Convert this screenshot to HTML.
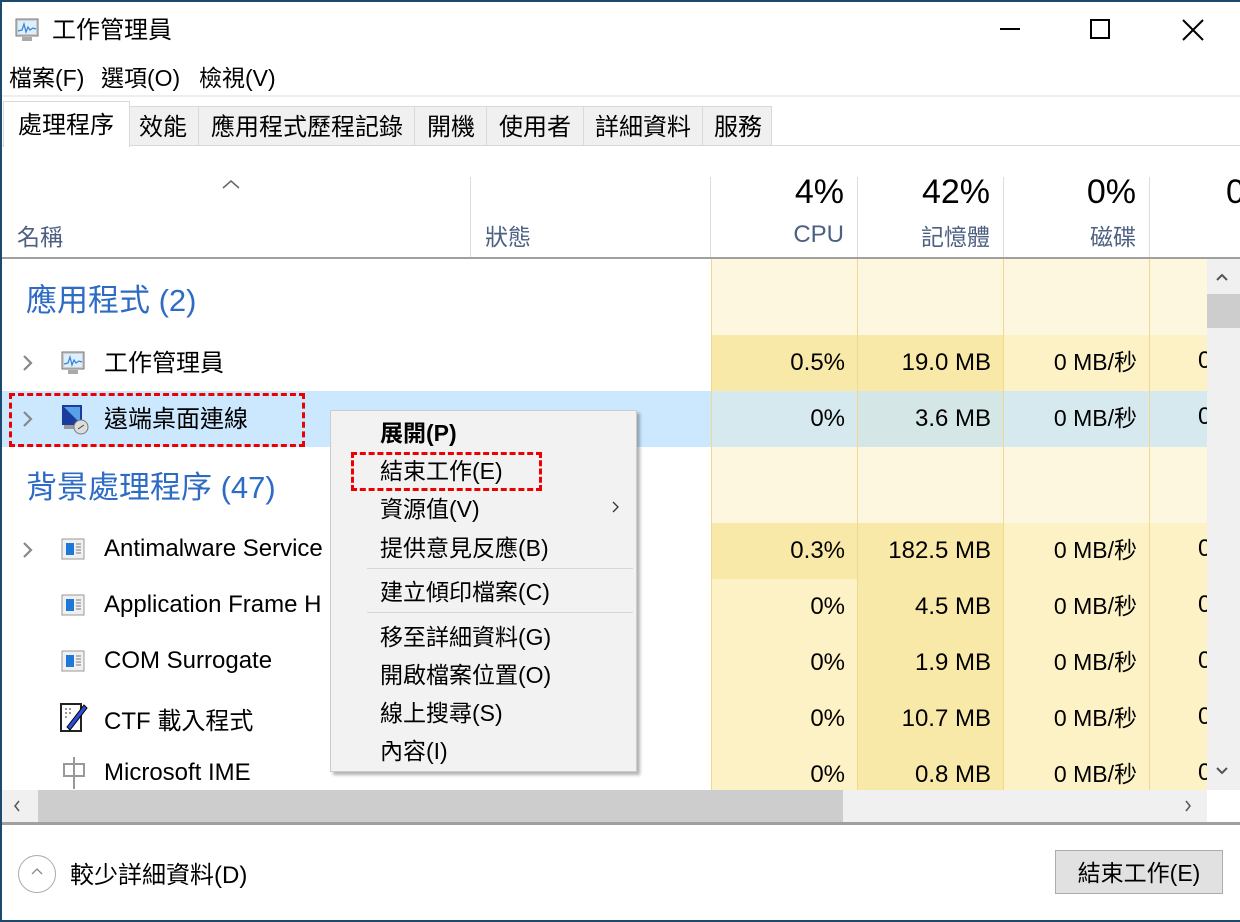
<!DOCTYPE html>
<html><head><meta charset="utf-8"><style>
*{margin:0;padding:0;box-sizing:border-box}
body{width:1240px;height:922px;overflow:hidden;background:#fff;font-family:"Liberation Sans","Noto Sans CJK TC",sans-serif;position:relative;color:#000}
.a{position:absolute;white-space:nowrap}
.c{position:absolute;height:56px;line-height:56px;text-align:right;padding-right:12px;font-size:24px}
.ms{font-size:23px;line-height:54px}
.m{position:absolute;left:380px;font-size:23px;white-space:nowrap}
.r{position:absolute;left:104px;font-size:24px;white-space:nowrap}
</style></head><body>
<div class="a" style="left:0;top:0;width:1240px;height:2px;background:#1b4a6e"></div>
<div class="a" style="left:0;top:0;width:2px;height:922px;background:#1b4a6e"></div>
<div class="a" style="left:0;top:920px;width:1240px;height:2px;background:#1b4a6e"></div>
<!-- title -->
<svg class="a" style="left:14px;top:16px" width="28" height="28" viewBox="0 0 28 28"><rect x="2" y="3" width="22" height="17" fill="#ccc" stroke="#777"/><rect x="4" y="5" width="18" height="13" fill="#dcefff"/><path d="M4 15l4-1 2-6 2 8 2-5 2 3 3-2 3 1" stroke="#3a7fcf" fill="none" stroke-width="1.2"/><rect x="8" y="21" width="10" height="4" fill="#aaa"/></svg>
<div class="a" style="left:52px;top:10px;font-size:24px">工作管理員</div>
<div class="a" style="left:1000px;top:28px;width:20px;height:2px;background:#000"></div>
<div class="a" style="left:1090px;top:19px;width:20px;height:20px;border:2px solid #000"></div>
<svg class="a" style="left:1182px;top:19px" width="22" height="22"><path d="M1 1L21 21M21 1L1 21" stroke="#000" stroke-width="2"/></svg>
<!-- menu -->
<div class="a" style="left:9px;top:59px;font-size:23px">檔案(F)</div>
<div class="a" style="left:101px;top:59px;font-size:23px">選項(O)</div>
<div class="a" style="left:199px;top:59px;font-size:23px">檢視(V)</div>
<div class="a" style="left:2px;top:95px;width:1238px;height:2px;background:#eee"></div>
<!-- tabs -->
<div class="a" style="left:2px;top:145px;width:1238px;height:1px;background:#d9d9d9"></div>
<div class="a" style="left:109px;top:106px;width:663px;height:40px;background:#f0f0f0;border:1px solid #d9d9d9"></div>
<div class="a" style="left:3px;top:101px;width:127px;height:46px;background:#fff;border:1px solid #d9d9d9;border-bottom:none"></div>
<div class="a" style="left:18px;top:105px;font-size:24px">處理程序</div>
<div class="a" style="left:139px;top:107px;font-size:24px">效能</div>
<div class="a" style="left:198px;top:106px;width:1px;height:40px;background:#d9d9d9"></div>
<div class="a" style="left:211px;top:107px;font-size:24px">應用程式歷程記錄</div>
<div class="a" style="left:414px;top:106px;width:1px;height:40px;background:#d9d9d9"></div>
<div class="a" style="left:427px;top:107px;font-size:24px">開機</div>
<div class="a" style="left:486px;top:106px;width:1px;height:40px;background:#d9d9d9"></div>
<div class="a" style="left:499px;top:107px;font-size:24px">使用者</div>
<div class="a" style="left:583px;top:106px;width:1px;height:40px;background:#d9d9d9"></div>
<div class="a" style="left:595px;top:107px;font-size:24px">詳細資料</div>
<div class="a" style="left:702px;top:106px;width:1px;height:40px;background:#d9d9d9"></div>
<div class="a" style="left:714px;top:107px;font-size:24px">服務</div>
<!-- header -->
<svg class="a" style="left:222px;top:179px" width="18" height="10"><path d="M1 9L9 2L17 9" stroke="#666" fill="none" stroke-width="1.5"/></svg>
<div class="a" style="left:17px;top:218px;font-size:23px;color:#4d6082">名稱</div>
<div class="a" style="left:485px;top:218px;font-size:23px;color:#4d6082">狀態</div>
<div class="a" style="left:470px;top:177px;width:1px;height:81px;background:#ddd"></div>
<div class="a" style="left:710px;top:177px;width:1px;height:81px;background:#ddd"></div>
<div class="a" style="left:857px;top:177px;width:1px;height:81px;background:#ddd"></div>
<div class="a" style="left:1003px;top:177px;width:1px;height:81px;background:#ddd"></div>
<div class="a" style="left:1149px;top:177px;width:1px;height:81px;background:#ddd"></div>
<div class="a" style="left:711px;top:173px;width:133px;text-align:right;font-size:34px">4%</div>
<div class="a" style="left:711px;top:221px;width:133px;text-align:right;font-size:24px;color:#4d6082">CPU</div>
<div class="a" style="left:858px;top:173px;width:132px;text-align:right;font-size:34px">42%</div>
<div class="a" style="left:858px;top:218px;width:132px;text-align:right;font-size:23px;color:#4d6082">記憶體</div>
<div class="a" style="left:1004px;top:173px;width:132px;text-align:right;font-size:34px">0%</div>
<div class="a" style="left:1004px;top:218px;width:132px;text-align:right;font-size:23px;color:#4d6082">磁碟</div>
<div class="a" style="left:1226px;top:173px;font-size:34px">0</div>
<div class="a" style="left:2px;top:257px;width:1238px;height:2px;background:#a0a0a0"></div>
<!-- data background -->
<div class="a" style="left:711px;top:259px;width:496px;height:531px;background:#fef7e0"></div>
<div class="a" style="left:711px;top:335px;width:496px;height:56px;background:#fdf1c6"></div>
<div class="a" style="left:711px;top:335px;width:292px;height:56px;background:#f9e9a8"></div>
<div class="a" style="left:711px;top:523px;width:496px;height:267px;background:#fdf1c6"></div>
<div class="a" style="left:857px;top:523px;width:146px;height:267px;background:#f9e9a8"></div>
<div class="a" style="left:711px;top:523px;width:146px;height:56px;background:#f9e9a8"></div>
<div class="a" style="left:2px;top:391px;width:709px;height:56px;background:#cce8ff"></div>
<div class="a" style="left:711px;top:391px;width:496px;height:56px;background:#d6e9ef"></div>
<div class="a" style="left:857px;top:391px;width:146px;height:56px;background:#d4e7e6"></div>
<div class="a" style="left:711px;top:259px;width:1px;height:531px;background:#f0d890"></div>
<div class="a" style="left:857px;top:259px;width:1px;height:531px;background:#f0d890"></div>
<div class="a" style="left:1003px;top:259px;width:1px;height:531px;background:#f0d890"></div>
<div class="a" style="left:1149px;top:259px;width:1px;height:531px;background:#f0d890"></div>
<!-- groups -->
<div class="a" style="left:26px;top:275px;font-size:31px;color:#2e6bc5">應用程式 (2)</div>
<div class="a" style="left:26px;top:462px;font-size:31px;color:#2e6bc5">背景處理程序 (47)</div>
<!-- rows -->
<svg class="a" style="left:22px;top:354px" width="12" height="18"><path d="M2 2L9 9L2 16" stroke="#888" fill="none" stroke-width="2.2"/></svg>
<svg class="a" style="left:22px;top:410px" width="12" height="18"><path d="M2 2L9 9L2 16" stroke="#888" fill="none" stroke-width="2.2"/></svg>
<svg class="a" style="left:22px;top:541px" width="12" height="18"><path d="M2 2L9 9L2 16" stroke="#888" fill="none" stroke-width="2.2"/></svg>
<svg class="a" style="left:60px;top:349px" width="28" height="28" viewBox="0 0 28 28"><rect x="2" y="3" width="22" height="17" fill="#ccc" stroke="#777"/><rect x="4" y="5" width="18" height="13" fill="#dcefff"/><path d="M4 15l4-1 2-6 2 8 2-5 2 3 3-2 3 1" stroke="#3a7fcf" fill="none" stroke-width="1.2"/><rect x="8" y="21" width="10" height="4" fill="#aaa"/></svg>
<svg class="a" style="left:60px;top:403px" width="30" height="32" viewBox="0 0 30 32"><rect x="2" y="2" width="20" height="20" fill="#1a3c9c"/><path d="M4 4L20 20V4z" fill="#5aa0e8"/><rect x="4" y="22" width="14" height="4" fill="#999"/><circle cx="21" cy="24" r="7" fill="#ddd" stroke="#777"/><path d="M18 26l6-4" stroke="#444"/></svg>
<div class="r" style="top:343px">工作管理員</div>
<div class="r" style="top:399px">遠端桌面連線</div>
<div class="a" style="left:9px;top:393px;width:296px;height:54px;border:3px dashed #e00"></div>
<svg class="a" style="left:61px;top:538px" width="24" height="22"><rect x="1" y="1" width="22" height="20" fill="#f0f0f0" stroke="#999"/><rect x="5" y="5" width="8" height="12" fill="#1e78d7"/><path d="M15 6h5M15 9h5M15 12h5M15 15h5" stroke="#777"/></svg>
<svg class="a" style="left:61px;top:594px" width="24" height="22"><rect x="1" y="1" width="22" height="20" fill="#f0f0f0" stroke="#999"/><rect x="5" y="5" width="8" height="12" fill="#1e78d7"/><path d="M15 6h5M15 9h5M15 12h5M15 15h5" stroke="#777"/></svg>
<svg class="a" style="left:61px;top:650px" width="24" height="22"><rect x="1" y="1" width="22" height="20" fill="#f0f0f0" stroke="#999"/><rect x="5" y="5" width="8" height="12" fill="#1e78d7"/><path d="M15 6h5M15 9h5M15 12h5M15 15h5" stroke="#777"/></svg>
<svg class="a" style="left:60px;top:701px" width="28" height="32"><rect x="1" y="3" width="20" height="27" fill="#fff" stroke="#222" stroke-width="2"/><path d="M5 8h2M9 8h2M5 12h2M9 12h2M5 16h2" stroke="#333"/><path d="M7 26L24 4l3 3L10 29z" fill="#2b4ed8" stroke="#000"/></svg>
<svg class="a" style="left:62px;top:756px" width="24" height="34"><path d="M12 1v32" stroke="#999" stroke-width="2"/><rect x="2" y="8" width="20" height="12" fill="none" stroke="#999" stroke-width="2"/></svg>
<div class="r" style="top:535px">Antimalware Service</div>
<div class="r" style="top:591px">Application Frame H</div>
<div class="r" style="top:647px">COM Surrogate</div>
<div class="r" style="top:701px">CTF 載入程式</div>
<div class="r" style="top:759px">Microsoft IME</div>
<!-- data -->
<div class="c" style="left:711px;top:335px;width:146px">0.5%</div><div class="c" style="left:857px;top:335px;width:146px">19.0 MB</div><div class="c ms" style="left:1003px;top:335px;width:146px">0 MB/秒</div>
<div class="c" style="left:711px;top:391px;width:146px">0%</div><div class="c" style="left:857px;top:391px;width:146px">3.6 MB</div><div class="c ms" style="left:1003px;top:391px;width:146px">0 MB/秒</div>
<div class="c" style="left:711px;top:523px;width:146px">0.3%</div><div class="c" style="left:857px;top:523px;width:146px">182.5 MB</div><div class="c ms" style="left:1003px;top:523px;width:146px">0 MB/秒</div>
<div class="c" style="left:711px;top:579px;width:146px">0%</div><div class="c" style="left:857px;top:579px;width:146px">4.5 MB</div><div class="c ms" style="left:1003px;top:579px;width:146px">0 MB/秒</div>
<div class="c" style="left:711px;top:635px;width:146px">0%</div><div class="c" style="left:857px;top:635px;width:146px">1.9 MB</div><div class="c ms" style="left:1003px;top:635px;width:146px">0 MB/秒</div>
<div class="c" style="left:711px;top:691px;width:146px">0%</div><div class="c" style="left:857px;top:691px;width:146px">10.7 MB</div><div class="c ms" style="left:1003px;top:691px;width:146px">0 MB/秒</div>
<div class="c" style="left:711px;top:747px;width:146px">0%</div><div class="c" style="left:857px;top:747px;width:146px">0.8 MB</div><div class="c ms" style="left:1003px;top:747px;width:146px">0 MB/秒</div>
<div class="a" style="left:1198px;top:347px;font-size:24px">0</div>
<div class="a" style="left:1198px;top:403px;font-size:24px">0</div>
<div class="a" style="left:1198px;top:535px;font-size:24px">0</div>
<div class="a" style="left:1198px;top:591px;font-size:24px">0</div>
<div class="a" style="left:1198px;top:647px;font-size:24px">0</div>
<div class="a" style="left:1198px;top:703px;font-size:24px">0</div>
<div class="a" style="left:1198px;top:759px;font-size:24px">0</div>
<!-- vscroll -->
<div class="a" style="left:1207px;top:259px;width:33px;height:531px;background:#f0f0f0"></div>
<div class="a" style="left:1207px;top:294px;width:33px;height:34px;background:#cdcdcd"></div>
<svg class="a" style="left:1215px;top:272px" width="14" height="10"><path d="M2 8L7 3L12 8" stroke="#555" fill="none" stroke-width="2"/></svg>
<svg class="a" style="left:1215px;top:766px" width="14" height="10"><path d="M2 2L7 7L12 2" stroke="#555" fill="none" stroke-width="2"/></svg>
<!-- hscroll -->
<div class="a" style="left:2px;top:790px;width:1205px;height:32px;background:#f0f0f0"></div>
<div class="a" style="left:38px;top:790px;width:805px;height:32px;background:#cdcdcd"></div>
<svg class="a" style="left:12px;top:799px" width="10" height="14"><path d="M7 2L3 7L7 12" stroke="#555" fill="none" stroke-width="1.5"/></svg>
<svg class="a" style="left:1183px;top:799px" width="10" height="14"><path d="M3 2L7 7L3 12" stroke="#555" fill="none" stroke-width="1.5"/></svg>
<div class="a" style="left:2px;top:822px;width:1238px;height:3px;background:#a0a0a0"></div>
<!-- footer -->
<div class="a" style="left:18px;top:855px;width:38px;height:38px;border:1px solid #aaa;border-radius:50%"></div>
<svg class="a" style="left:30px;top:866px" width="14" height="10"><path d="M2 8L7 3L12 8" stroke="#888" fill="none" stroke-width="1.3"/></svg>
<div class="a" style="left:70px;top:855px;font-size:24px">較少詳細資料(D)</div>
<div class="a" style="left:1055px;top:850px;width:168px;height:44px;background:#e1e1e1;border:1px solid #adadad"></div>
<div class="a" style="left:1055px;top:854px;width:168px;text-align:center;font-size:23px">結束工作(E)</div>
<!-- context menu -->
<div class="a" style="left:330px;top:410px;width:307px;height:362px;background:#f2f2f2;border:1px solid #ccc;box-shadow:3px 3px 3px rgba(0,0,0,.3)"></div>
<div class="m" style="top:414px;font-weight:bold">展開(P)</div>
<div class="m" style="top:452px">結束工作(E)</div>
<div class="a" style="left:351px;top:452px;width:191px;height:39px;border:3px dashed #e00"></div>
<div class="m" style="top:490px">資源值(V)</div>
<svg class="a" style="left:611px;top:500px" width="10" height="14"><path d="M2 2L7 7L2 12" stroke="#333" fill="none" stroke-width="1.3"/></svg>
<div class="m" style="top:529px">提供意見反應(B)</div>
<div class="a" style="left:367px;top:568px;width:266px;height:1px;background:#d6d6d6"></div>
<div class="m" style="top:573px">建立傾印檔案(C)</div>
<div class="a" style="left:367px;top:612px;width:266px;height:1px;background:#d6d6d6"></div>
<div class="m" style="top:618px">移至詳細資料(G)</div>
<div class="m" style="top:656px">開啟檔案位置(O)</div>
<div class="m" style="top:694px">線上搜尋(S)</div>
<div class="m" style="top:732px">內容(I)</div>
</body></html>
